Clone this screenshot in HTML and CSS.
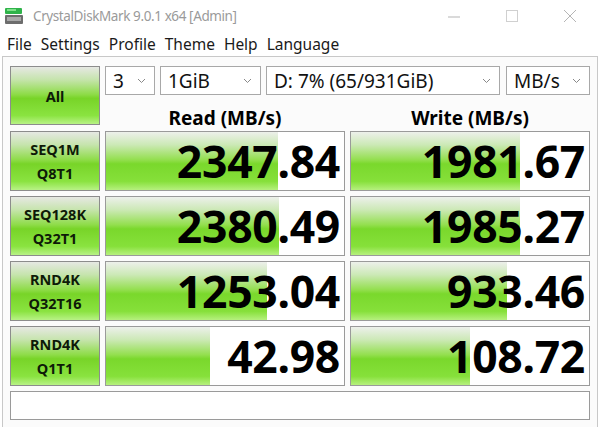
FILE: index.html
```html
<!DOCTYPE html>
<html lang="en">
<head>
    <meta charset="UTF-8">
    <title>CrystalDiskMark 9.0.1 x64 [Admin]</title>
    <link rel="stylesheet" href="styles.css">
</head>
<body>
    <div class="titlebar">
        <svg class="app-icon" width="20" height="18" viewBox="0 0 20 18">
            <rect x="1" y="1" width="17" height="6" rx="1" fill="#2fb34a"/>
            <rect x="3" y="2" width="9" height="2" fill="#7fe08a"/>
            <rect x="1" y="8" width="18" height="9" rx="1" fill="#6d6d6d"/>
            <rect x="3" y="10" width="14" height="4" fill="#a9a9a9"/>
        </svg>
        <span class="title">CrystalDiskMark 9.0.1 x64 [Admin]</span>
        <div class="win-buttons">
            <svg width="14" height="14" viewBox="0 0 14 14"><line x1="1" y1="8" x2="13" y2="8" stroke="#b5b5b5"/></svg>
            <svg width="14" height="14" viewBox="0 0 14 14"><rect x="1.5" y="1.5" width="11" height="11" fill="none" stroke="#d0d0d0"/></svg>
            <svg width="14" height="14" viewBox="0 0 14 14"><path d="M1 1 L13 13 M13 1 L1 13" stroke="#b5b5b5"/></svg>
        </div>
    </div>
    <div class="menubar">
        <span>File</span>
        <span>Settings</span>
        <span>Profile</span>
        <span>Theme</span>
        <span>Help</span>
        <span>Language</span>
    </div>
    <div class="client">
        <div class="top">
            <div class="btn btn-all">All</div>
            <div class="top-right">
                <div class="combos">
                    <div class="combo c-count">3<svg class="chev" width="9" height="6" viewBox="0 0 9 6"><polyline points="1,1 4.5,4.5 8,1" fill="none" stroke="#888"/></svg></div>
                    <div class="combo c-size">1GiB<svg class="chev" width="9" height="6" viewBox="0 0 9 6"><polyline points="1,1 4.5,4.5 8,1" fill="none" stroke="#888"/></svg></div>
                    <div class="combo c-drive">D: 7% (65/931GiB)<svg class="chev" width="9" height="6" viewBox="0 0 9 6"><polyline points="1,1 4.5,4.5 8,1" fill="none" stroke="#888"/></svg></div>
                    <div class="combo c-unit">MB/s<svg class="chev" width="9" height="6" viewBox="0 0 9 6"><polyline points="1,1 4.5,4.5 8,1" fill="none" stroke="#888"/></svg></div>
                </div>
                <div class="headers">
                    <div class="head">Read (MB/s)</div>
                    <div class="head">Write (MB/s)</div>
                </div>
            </div>
        </div>
        <div class="rows">
            <div class="row">
                <div class="btn">SEQ1M<br>Q8T1</div>
                <div class="result"><div class="bar" style="width: 72.4%"></div><span class="value">2347.84</span></div>
                <div class="result"><div class="bar" style="width: 71.1%"></div><span class="value">1981.67</span></div>
            </div>
            <div class="row">
                <div class="btn">SEQ128K<br>Q32T1</div>
                <div class="result"><div class="bar" style="width: 72.6%"></div><span class="value">2380.49</span></div>
                <div class="result"><div class="bar" style="width: 71.2%"></div><span class="value">1985.27</span></div>
            </div>
            <div class="row">
                <div class="btn">RND4K<br>Q32T16</div>
                <div class="result"><div class="bar" style="width: 67.8%"></div><span class="value">1253.04</span></div>
                <div class="result"><div class="bar" style="width: 65.7%"></div><span class="value">933.46</span></div>
            </div>
            <div class="row">
                <div class="btn">RND4K<br>Q1T1</div>
                <div class="result"><div class="bar" style="width: 43.5%"></div><span class="value">42.98</span></div>
                <div class="result"><div class="bar" style="width: 50.2%"></div><span class="value">108.72</span></div>
            </div>
        </div>
        <div class="status"></div>
    </div>
</body>
</html>
```

FILE: styles.css
```css
body {
    margin: 0;
    padding: 0;
    font-family: "Noto Sans", "Open Sans", sans-serif;
    background-color: #ffffff;
    width: 601px;
    height: 428px;
    overflow: hidden;
}
.titlebar {
    height: 32px;
    display: flex;
    align-items: center;
    background-color: #ffffff;
}
.app-icon {
    margin-left: 4px;
    margin-right: 9px;
}
.title {
    color: #9a9a9a;
    font-size: 13.5px;
    letter-spacing: -0.4px;
}
.win-buttons {
    margin-left: auto;
    display: flex;
    gap: 44px;
    margin-right: 24px;
}
.menubar {
    height: 24px;
    display: flex;
    align-items: center;
    padding-left: 7px;
    gap: 9px;
    font-size: 15.5px;
    color: #1a1a1a;
}
.client {
    margin-left: 2px;
    width: 596px;
    height: 371px;
    border-top: 1px solid #c8c8c8;
    border-left: 1px solid #c8c8c8;
    border-right: 1px solid #c8c8c8;
    background-color: #fbfbfb;
    padding: 9px 0 0 7px;
    box-sizing: border-box;
}
.top {
    display: flex;
    height: 59px;
}
.btn {
    width: 90px;
    box-sizing: border-box;
    border: 1px solid #8c8c8c;
    background: linear-gradient(to bottom, #e6e8e3 0%, #c6e4ad 22%, #8edc48 48%, #78d428 55%, #8ae340 85%, #b8f286 100%);
    display: flex;
    align-items: center;
    justify-content: center;
    text-align: center;
    font-weight: bold;
    font-size: 14.5px;
    line-height: 24px;
    color: #0e1a08;
}
.btn-all {
    height: 59px;
}
.top-right {
    margin-left: 5px;
    width: 485px;
}
.combos {
    display: flex;
    height: 29px;
}
.combo {
    box-sizing: border-box;
    height: 29px;
    border: 1px solid #a8a8a8;
    background-color: #ffffff;
    font-size: 19px;
    color: #111;
    display: flex;
    align-items: center;
    padding-left: 7px;
    padding-right: 8px;
    margin-right: 5px;
}
.combo .chev {
    margin-left: auto;
}
.c-count { width: 50px; }
.c-size { width: 101px; }
.c-drive { width: 234px; margin-right: 6px; }
.c-unit { width: 84px; margin-right: 0; }
.headers {
    display: flex;
    height: 30px;
}
.head {
    width: 240px;
    text-align: center;
    font-weight: bold;
    font-size: 19px;
    line-height: 26px;
    padding-top: 10px;
    color: #000;
}
.head + .head {
    margin-left: 5px;
}
.rows {
    margin-top: 6px;
    display: flex;
    flex-direction: column;
    gap: 5px;
}
.row {
    display: grid;
    grid-template-columns: 90px 240px 240px;
    column-gap: 5px;
    height: 60px;
}
.row .btn {
    height: 60px;
}
.result {
    position: relative;
    box-sizing: border-box;
    border: 1px solid #9a9a9a;
    background-color: #ffffff;
    display: flex;
    align-items: center;
    justify-content: flex-end;
    overflow: hidden;
}
.bar {
    position: absolute;
    left: 0;
    top: 0;
    bottom: 0;
    background: linear-gradient(to bottom, #edf0eb 0%, #cce9b6 22%, #93df4e 48%, #7ad82c 55%, #86e03a 85%, #b6f07e 100%);
}
.value {
    position: relative;
    font-weight: bold;
    font-size: 44.5px;
    letter-spacing: -0.3px;
    color: #000;
    padding-right: 4px;
    line-height: 58px;
}
.status {
    margin-top: 5px;
    width: 580px;
    height: 29px;
    box-sizing: border-box;
    border: 1px solid #9a9a9a;
    background-color: #ffffff;
}
```
